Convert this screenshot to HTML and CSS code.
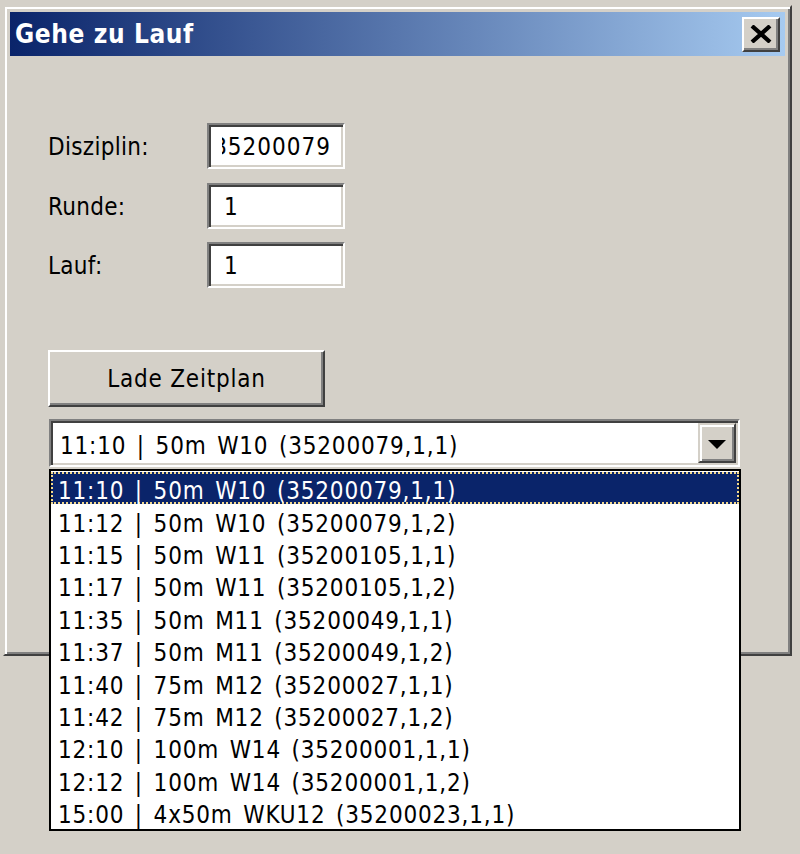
FILE: index.html
```html
<!DOCTYPE html>
<html lang="de">
<head>
    <meta charset="UTF-8">
    <title>Gehe zu Lauf</title>
    <link rel="stylesheet" href="styles.css">
</head>
<body>
<div class="window">
    <div class="titlebar">
        <span class="title">Gehe zu Lauf</span>
        <div class="close">
            <svg width="22" height="18" viewBox="0 0 22 18">
                <path d="M2 1 L20 17 M20 1 L2 17" stroke="#000" stroke-width="4.2" fill="none"/>
            </svg>
        </div>
    </div>
    <div class="content">
        <div class="row">
            <label class="lbl">Disziplin:</label>
            <div class="field"><div class="clip"><span>35200079</span></div></div>
        </div>
        <div class="row">
            <label class="lbl">Runde:</label>
            <div class="field"><div class="clip start"><span>1</span></div></div>
        </div>
        <div class="row">
            <label class="lbl">Lauf:</label>
            <div class="field"><div class="clip start"><span>1</span></div></div>
        </div>

        <div class="btn">Lade Zeitplan</div>

        <div class="combo">
            <div class="combo-text">11:10 | 50m W10 (35200079,1,1)</div>
            <div class="combo-btn"><span class="arrow"></span></div>
            <div class="list">
                <div class="item selected">11:10 | 50m W10 (35200079,1,1)</div>
                <div class="item">11:12 | 50m W10 (35200079,1,2)</div>
                <div class="item">11:15 | 50m W11 (35200105,1,1)</div>
                <div class="item">11:17 | 50m W11 (35200105,1,2)</div>
                <div class="item">11:35 | 50m M11 (35200049,1,1)</div>
                <div class="item">11:37 | 50m M11 (35200049,1,2)</div>
                <div class="item">11:40 | 75m M12 (35200027,1,1)</div>
                <div class="item">11:42 | 75m M12 (35200027,1,2)</div>
                <div class="item">12:10 | 100m W14 (35200001,1,1)</div>
                <div class="item">12:12 | 100m W14 (35200001,1,2)</div>
                <div class="item">15:00 | 4x50m WKU12 (35200023,1,1)</div>
            </div>
        </div>
    </div>
</div>
</body>
</html>
```

FILE: styles.css
```css
html, body{
    min-height: 854px;
}
body{
    margin: 0;
    background: #d4d0c8;
    font-family: "DejaVu Sans Condensed", "DejaVu Sans", sans-serif;
    font-stretch: condensed;
    font-size: 24px;
    color: #000;
}
.window{
    position: relative;
    box-sizing: border-box;
    width: 789px;
    height: 651px;
    margin: 5px 0 0 3px;
    border-top: 2px solid #d4d0c8;
    border-left: 2px solid #d4d0c8;
    border-right: 2px solid #404040;
    border-bottom: 2px solid #404040;
    box-shadow: inset 2px 2px #fff, inset -2px -2px #808080;
    padding: 5px;
}
.titlebar{
    height: 44px;
    background: linear-gradient(to right, #0a246a, #a6caf0);
    display: flex;
    align-items: center;
    justify-content: space-between;
    padding: 0 5px;
}
.title{
    color: #fff;
    font-weight: bold;
    font-size: 26px;
    letter-spacing: 0.6px;
}
.close{
    box-sizing: border-box;
    width: 38px;
    height: 35px;
    background: #d4d0c8;
    border-top: 2px solid #fff;
    border-left: 2px solid #fff;
    border-right: 2px solid #404040;
    border-bottom: 2px solid #404040;
    box-shadow: inset -2px -2px #808080;
    display: flex;
    align-items: center;
    justify-content: center;
}
.content{
    padding: 67px 0 0 38px;
}
.row{
    display: flex;
    align-items: center;
    height: 46px;
    margin-bottom: 13.5px;
}
.lbl{
    width: 159px;
    letter-spacing: 0.3px;
    padding-top: 2px;
}
.field{
    box-sizing: border-box;
    width: 138px;
    height: 46px;
    background: #fff;
    border-top: 2px solid #808080;
    border-left: 2px solid #808080;
    border-right: 2px solid #fff;
    border-bottom: 2px solid #fff;
    box-shadow: inset 2px 2px #404040, inset -2px -2px #d4d0c8;
    padding: 2px 12px 0 13px;
    display: flex;
    align-items: center;
    letter-spacing: 1px;
}
.clip{
    flex: 1;
    overflow: hidden;
    display: flex;
    justify-content: flex-end;
    white-space: nowrap;
}
.clip.start{
    justify-content: flex-start;
    padding-left: 2px;
}
.btn{
    box-sizing: border-box;
    width: 277px;
    height: 57px;
    margin-top: 62px;
    border-top: 2px solid #fff;
    border-left: 2px solid #fff;
    border-right: 2px solid #404040;
    border-bottom: 2px solid #404040;
    box-shadow: inset -2px -2px #808080;
    display: flex;
    align-items: center;
    justify-content: center;
    letter-spacing: 0.8px;
}
.combo{
    position: relative;
    z-index: 2;
    box-sizing: border-box;
    width: 691px;
    height: 48px;
    margin-top: 12px;
    margin-left: 1px;
    background: #fff;
    border-top: 2px solid #808080;
    border-left: 2px solid #808080;
    border-right: 2px solid #fff;
    border-bottom: 2px solid #fff;
    box-shadow: inset 2px 2px #404040, inset -2px -2px #d4d0c8;
    padding: 2px;
    display: flex;
}
.combo-text{
    flex: 1;
    padding: 5px 0 0 7px;
    display: flex;
    align-items: center;
    white-space: nowrap;
    letter-spacing: 0.8px;
    word-spacing: 3px;
}
.combo-btn{
    box-sizing: border-box;
    width: 38px;
    background: #d4d0c8;
    border-top: 2px solid #d4d0c8;
    border-left: 2px solid #d4d0c8;
    border-right: 2px solid #404040;
    border-bottom: 2px solid #404040;
    box-shadow: inset 2px 2px #fff, inset -2px -2px #808080;
    display: flex;
    align-items: center;
    justify-content: center;
}
.arrow{
    width: 0;
    height: 0;
    border-left: 9px solid transparent;
    border-right: 9px solid transparent;
    border-top: 9px solid #000;
    margin-top: 2px;
}
.list{
    position: absolute;
    left: -2px;
    top: 48px;
    box-sizing: border-box;
    width: 692px;
    background: #fff;
    border: 2px solid #000;
    padding: 1px 0;
}
.item{
    height: 32.4px;
    box-sizing: border-box;
    border: 2px solid transparent;
    padding: 6px 0 0 5px;
    display: flex;
    align-items: center;
    white-space: nowrap;
    letter-spacing: 0.8px;
    word-spacing: 3px;
}
.item.selected{
    background: #0a246a;
    color: #fff;
    border: 2px dotted #f2d98e;
}
```
